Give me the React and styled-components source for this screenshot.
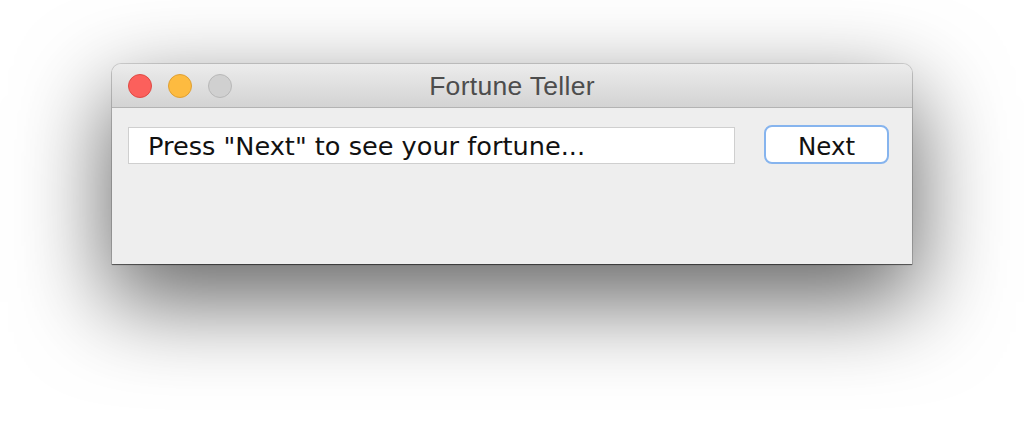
import React from "react";
import styled, { createGlobalStyle } from "styled-components";

const GlobalStyle = createGlobalStyle`
  html, body {
    margin: 0;
    padding: 0;
    background: #ffffff;
  }
  body {
    width: 1024px;
    height: 424px;
    overflow: hidden;
  }
`;

const Desktop = styled.div`
  width: 1024px;
  height: 424px;
  padding: 64px 0 0 112px;
  box-sizing: border-box;
  background: #ffffff;
`;

const Window = styled.div`
  width: 800px;
  height: 200px;
  display: flex;
  flex-direction: column;
  border-radius: 9px 9px 0 0;
  background: #eeeeee;
  box-shadow: 0 0 0 1px rgba(0, 0, 0, 0.14), 0 1px 1px rgba(0, 0, 0, 0.5),
    0 34px 90px 4px rgba(0, 0, 0, 0.6);
  overflow: hidden;
`;

const TitleBar = styled.div`
  position: relative;
  height: 43px;
  flex: none;
  display: flex;
  align-items: center;
  justify-content: center;
  background: linear-gradient(#ececec, #d3d3d3);
  border-bottom: 1px solid #b3b3b3;
`;

const Lights = styled.div`
  position: absolute;
  left: 16px;
  top: 0;
  bottom: 0;
  display: flex;
  align-items: center;
  gap: 16px;
`;

const Light = styled.span`
  width: 24px;
  height: 24px;
  box-sizing: border-box;
  border-radius: 50%;
  background: ${(p) => p.$fill};
  border: 1px solid ${(p) => p.$edge};
`;

const Title = styled.div`
  font-family: "Liberation Sans", Arial, sans-serif;
  font-size: 26.5px;
  letter-spacing: 0.3px;
  color: #4d4d4d;
  margin-top: 2px;
`;

const Content = styled.div`
  display: flex;
  align-items: flex-start;
  padding: 19px 23px 0 16px;
  gap: 29px;
`;

const Field = styled.div`
  flex: 1;
  height: 37px;
  box-sizing: border-box;
  background: #ffffff;
  border: 1px solid #cfcfcf;
  padding-left: 19px;
  display: flex;
  align-items: center;
  font-family: "DejaVu Sans", sans-serif;
  font-size: 25.6px;
  color: #111111;
  white-space: nowrap;
`;

const Button = styled.button`
  width: 125px;
  height: 39px;
  margin-top: -2px;
  box-sizing: border-box;
  background: #ffffff;
  border: 2px solid #86b4ee;
  border-radius: 8px;
  font-family: "DejaVu Sans", sans-serif;
  font-size: 24.5px;
  color: #111111;
  padding: 3px 0 0;
  display: flex;
  align-items: center;
  justify-content: center;
`;

export default function App() {
  return (
    <>
      <GlobalStyle />
      <Desktop>
        <Window>
          <TitleBar>
            <Lights>
              <Light $fill="#fc605c" $edge="#df4a44" />
              <Light $fill="#fdbb40" $edge="#dfa033" />
              <Light $fill="#d0d0d0" $edge="#b8b8b8" />
            </Lights>
            <Title>Fortune Teller</Title>
          </TitleBar>
          <Content>
            <Field>Press "Next" to see your fortune...</Field>
            <Button>Next</Button>
          </Content>
        </Window>
      </Desktop>
    </>
  );
}
